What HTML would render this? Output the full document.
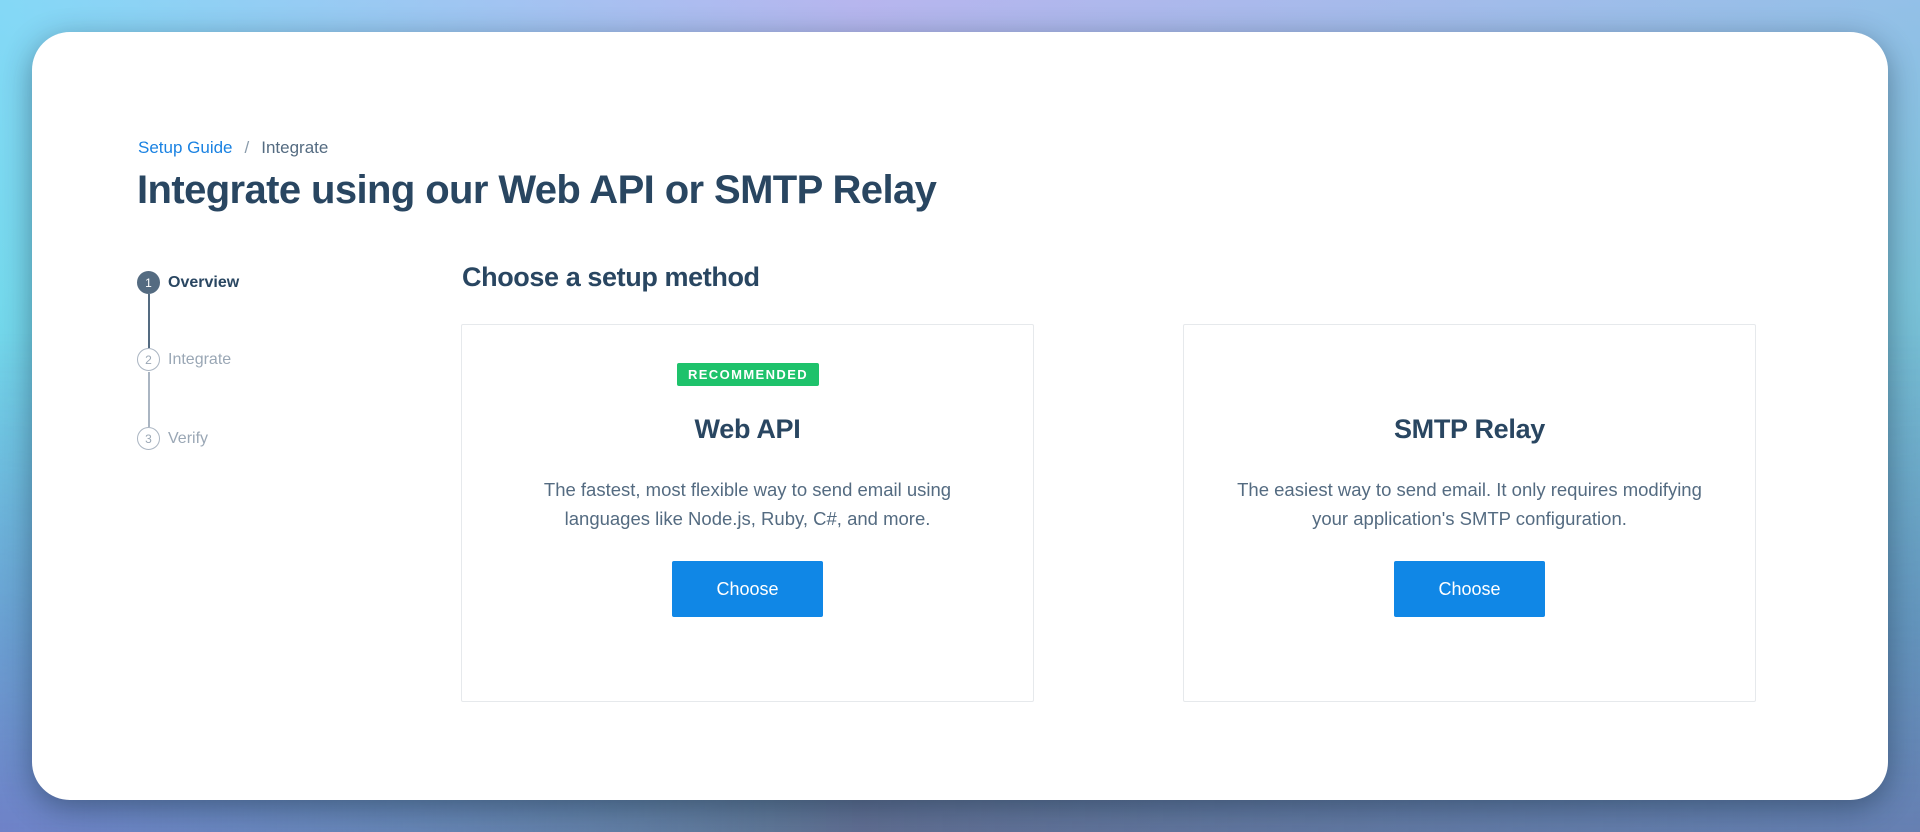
<!DOCTYPE html>
<html><head><meta charset="utf-8"><style>
*{margin:0;padding:0;box-sizing:border-box}
html,body{width:1920px;height:832px;overflow:hidden}
body{font-family:"Liberation Sans",sans-serif;background:linear-gradient(180deg,#b8b8ee 0%,#86bccf 35%,#4f8199 75%,#4a5f78 100%);position:relative}
.bg{position:absolute;inset:0;background:linear-gradient(90deg,rgba(110,230,250,.7) 0%,rgba(180,170,240,.2) 45%,rgba(110,200,225,.5) 100%)}
.bg2{position:absolute;inset:0;background:linear-gradient(90deg,rgba(120,80,190,.55) 0%,rgba(80,90,120,0) 40%,rgba(120,90,190,.35) 100%);-webkit-mask:linear-gradient(180deg,transparent 40%,#000 100%);mask:linear-gradient(180deg,transparent 40%,#000 100%)}
.card{position:absolute;left:32px;top:32px;width:1856px;height:768px;background:#fff;border-radius:38px;box-shadow:0 8px 30px rgba(20,40,60,.45)}
.bc{position:absolute;left:138px;top:138px;font-size:17px;color:#546b81}
.bc a{color:#1a82e2;text-decoration:none}
.bc .sep{margin:0 12px;color:#8a9bab}
h1{position:absolute;left:137px;top:168px;font-size:40px;font-weight:700;color:#294661;letter-spacing:-0.6px}
.step{position:absolute;left:137px;height:23px;display:flex;align-items:center;font-size:16px;color:#9aa7b5}
.circ{width:23px;height:23px;border-radius:50%;border:1.5px solid #aab5c2;font-size:12px;display:flex;align-items:center;justify-content:center;margin-right:8px;color:#9aa7b5}
.step.on{color:#294661;font-weight:700}
.step.on .circ{background:#546b81;border-color:#546b81;color:#fff;font-weight:400}
.line{position:absolute;left:148px;width:1.5px}
h2{position:absolute;left:462px;top:262px;font-size:27px;font-weight:700;color:#294661;letter-spacing:-0.4px}
.box{position:absolute;top:324px;width:573px;height:378px;border:1px solid #e6e9ec;border-radius:2px;text-align:center}
.badge{position:absolute;left:215px;top:38px;width:142px;height:23px;background:#1ec26b;color:#fff;font-size:13px;font-weight:700;letter-spacing:1.4px;line-height:23px;border-radius:2px}
.box h3{position:absolute;left:0;right:0;top:89px;font-size:27px;font-weight:700;color:#294661;letter-spacing:-0.3px}
.box p{position:absolute;left:0;right:0;top:150px;font-size:18.5px;line-height:29px;color:#546b81}
.btn{position:absolute;left:210px;top:236px;width:151px;height:56px;background:#1087e6;color:#fff;font-size:18px;line-height:56px;border-radius:2px}
</style></head><body><div class="bg"></div><div class="bg2"></div>
<div class="card">
</div>
<div class="bc"><a>Setup Guide</a><span class="sep">/</span>Integrate</div>
<h1>Integrate using our Web API or SMTP Relay</h1>
<div class="step on" style="top:271px"><span class="circ">1</span>Overview</div>
<div class="line" style="top:294px;height:54px;background:#546b81"></div>
<div class="step" style="top:348px"><span class="circ">2</span>Integrate</div>
<div class="line" style="top:372px;height:55px;background:#aab5c2"></div>
<div class="step" style="top:427px"><span class="circ">3</span>Verify</div>
<h2>Choose a setup method</h2>
<div class="box" style="left:461px"><div class="badge">RECOMMENDED</div><h3>Web API</h3><p>The fastest, most flexible way to send email using<br>languages like Node.js, Ruby, C#, and more.</p><div class="btn">Choose</div></div>
<div class="box" style="left:1183px"><h3>SMTP Relay</h3><p>The easiest way to send email. It only requires modifying<br>your application's SMTP configuration.</p><div class="btn">Choose</div></div>
</body></html>
